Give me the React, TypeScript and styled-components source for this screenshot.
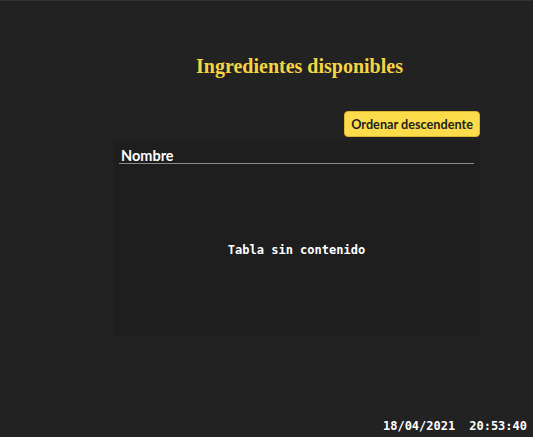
import React from "react";
import styled, { createGlobalStyle } from "styled-components";

const GlobalStyle = createGlobalStyle`
  html, body {
    margin: 0;
    padding: 0;
    background-color: #222222;
  }
  body {
    border-top: 1px solid #333333;
  }
`;

export default function App() {
  return (
    <>
      <GlobalStyle />
      <Page>
        <Content>
          <Title>Ingredientes disponibles</Title>
          <Toolbar>
            <SortButton type="button">Ordenar descendente</SortButton>
          </Toolbar>
          <TablePanel>
            <HeaderRow>
              <HeaderCell>Nombre</HeaderCell>
            </HeaderRow>
            <EmptyMessage>Tabla sin contenido</EmptyMessage>
          </TablePanel>
        </Content>
        <Footer>
          <span>18/04/2021</span>
          <span>20:53:40</span>
        </Footer>
      </Page>
    </>
  );
}

const Page = styled.main`
  min-height: 436px;
  display: flex;
  flex-direction: column;
  box-sizing: border-box;
`;

const Content = styled.section`
  width: 366px;
  margin-left: 114px;
  display: flex;
  flex-direction: column;
  flex: 1;
`;

const Title = styled.h1`
  margin: 54px 0 0 5px;
  text-align: center;
  font-family: "Liberation Serif", serif;
  font-weight: 700;
  font-size: 20px;
  line-height: 23px;
  color: #f5d442;
`;

const Toolbar = styled.div`
  margin-top: 33px;
  display: flex;
  justify-content: flex-end;
`;

const SortButton = styled.button`
  height: 26px;
  padding: 0 6px;
  border: 1px solid #d9b735;
  border-radius: 4px;
  background-color: #fcdc4a;
  color: #1e1e1e;
  font-family: Lato, sans-serif;
  font-weight: 700;
  font-size: 12.7px;
  cursor: pointer;
`;

const TablePanel = styled.article`
  height: 195px;
  margin-top: 4px;
  padding: 0 6px 0 5px;
  background-color: #1e1e1e;
  display: flex;
  flex-direction: column;
`;

const HeaderRow = styled.div`
  padding-top: 7px;
  border-bottom: 1px solid #8a8a8a;
`;

const HeaderCell = styled.div`
  padding-left: 2px;
  font-family: Lato, sans-serif;
  font-weight: 700;
  font-size: 14.5px;
  line-height: 15px;
  color: #ffffff;
`;

const EmptyMessage = styled.div`
  flex: 1;
  display: flex;
  align-items: center;
  justify-content: center;
  font-family: "DejaVu Sans Mono", monospace;
  font-weight: 700;
  font-size: 12px;
  color: #ffffff;
`;

const Footer = styled.footer`
  display: flex;
  justify-content: flex-end;
  gap: 14px;
  padding: 0 6px 4px 0;
  font-family: "DejaVu Sans Mono", monospace;
  font-weight: 700;
  font-size: 12px;
  color: #ffffff;
`;
